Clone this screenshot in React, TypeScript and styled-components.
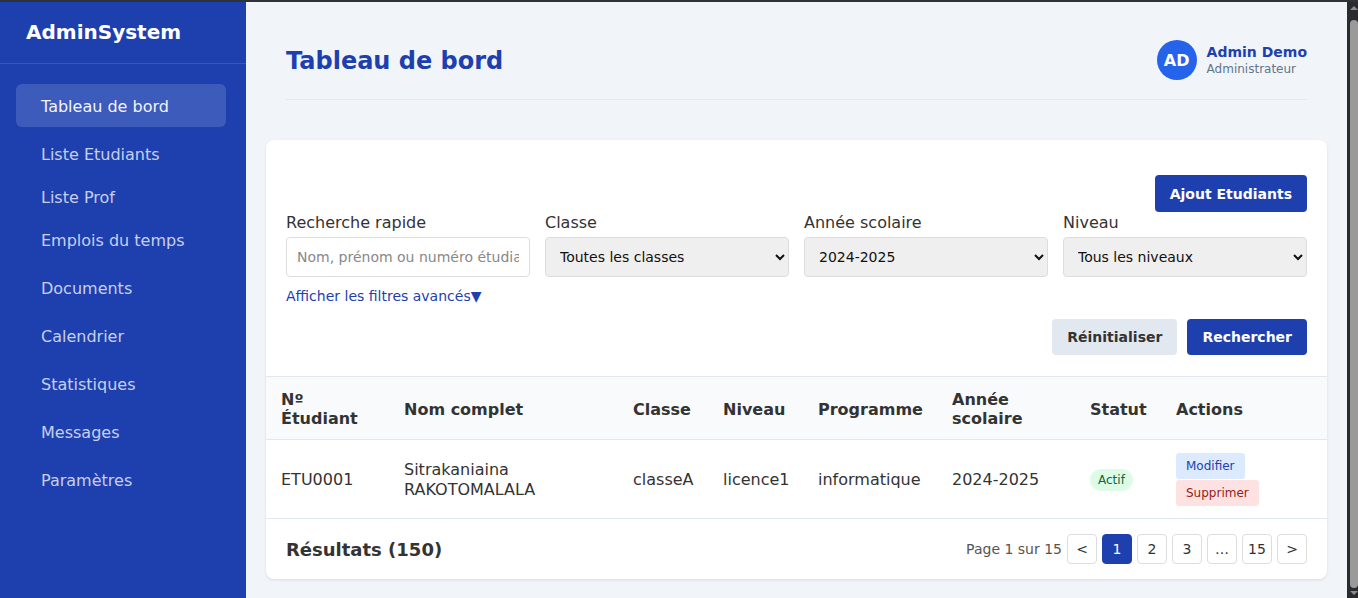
import React from "react";
import styled, { createGlobalStyle } from "styled-components";

const Global = createGlobalStyle`
  html { overflow: hidden; }
  * { box-sizing: border-box; }
  body { margin: 0; font-family: "DejaVu Sans", Verdana, sans-serif; color: #333; background: #f1f5f9; }
`;

const Layout = styled.div`
  display: flex;
  min-height: 100vh;
  margin-right: 11px;
`;

const TopEdge = styled.div`
  position: fixed;
  top: 0;
  left: 0;
  right: 0;
  height: 2px;
  background: #2f3236;
  z-index: 10;
`;

const ScrollTrack = styled.div`
  position: fixed;
  top: 0;
  right: 0;
  bottom: 0;
  width: 11px;
  background: #2b2b2f;
  z-index: 9;
`;

const ScrollThumb = styled.div`
  position: absolute;
  top: 20px;
  bottom: 10px;
  left: 3px;
  right: 0;
  border-radius: 4px;
  background: #9a9a9a;
`;

const ScrollArrow = styled.div<{ $down?: boolean }>`
  position: absolute;
  left: 3px;
  ${(p) => (p.$down ? "bottom: 3px;" : "top: 6px;")}
  width: 0;
  height: 0;
  border-left: 4px solid transparent;
  border-right: 4px solid transparent;
  ${(p) => (p.$down ? "border-top: 4px solid #8c8c8c;" : "border-bottom: 4px solid #8c8c8c;")}
`;

const Sidebar = styled.aside`
  width: 246px;
  flex-shrink: 0;
  background: #1e40af;
  color: #fff;
`;

const Brand = styled.div`
  height: 64px;
  padding: 0 26px;
  display: flex;
  align-items: center;
  font-size: 20px;
  font-weight: bold;
  border-bottom: 1px solid rgba(255, 255, 255, 0.12);
`;

const Nav = styled.nav`
  padding: 20px 20px 0 16px;
  display: flex;
  flex-direction: column;
`;

const NavItem = styled.a<{ $active?: boolean; $tight?: boolean }>`
  display: flex;
  align-items: center;
  height: 43px;
  padding: 1px 0 0 25px;
  margin-bottom: ${(p) => (p.$tight ? "0" : "5px")};
  border-radius: 6px;
  font-size: 16px;
  color: ${(p) => (p.$active ? "#f1f4fb" : "rgba(255,255,255,0.76)")};
  background: ${(p) => (p.$active ? "rgba(255,255,255,0.14)" : "transparent")};
  text-decoration: none;
`;

const Main = styled.main`
  flex: 1;
  padding: 20px;
  min-width: 0;
`;

const Header = styled.header`
  margin: 0 20px;
  padding: 20px 0 19px;
  border-bottom: 1px solid #e2e8f0;
  display: flex;
  justify-content: space-between;
  align-items: center;
`;

const Title = styled.h1`
  margin: 0;
  padding-top: 1px;
  font-size: 24px;
  font-weight: bold;
  color: #1e40af;
`;

const User = styled.div`
  display: flex;
  align-items: center;
  gap: 10px;
`;

const Avatar = styled.div`
  width: 40px;
  height: 40px;
  border-radius: 50%;
  background: #2563eb;
  color: #fff;
  font-weight: bold;
  font-size: 16px;
  display: flex;
  align-items: center;
  justify-content: center;
`;

const UserInfo = styled.div`
  display: flex;
  flex-direction: column;
  gap: 2px;
`;

const UserName = styled.span`
  font-size: 14px;
  font-weight: bold;
  color: #1e40af;
`;

const UserRole = styled.span`
  font-size: 12px;
  color: #64748b;
`;

const Card = styled.section`
  margin-top: 40px;
  background: #fff;
  border-radius: 8px;
  box-shadow: 0 1px 3px rgba(0, 0, 0, 0.1);
  overflow: hidden;
`;

const Filters = styled.div`
  padding: 35px 20px 21px;
  border-bottom: 1px solid #e2e8f0;
`;

const TopActions = styled.div`
  display: flex;
  justify-content: flex-end;
`;

const Button = styled.button<{ $variant?: "primary" | "secondary" }>`
  height: 36px;
  padding: 0 15px;
  border: none;
  border-radius: 4px;
  font-family: inherit;
  font-size: 14px;
  font-weight: bold;
  cursor: pointer;
  background: ${(p) => (p.$variant === "secondary" ? "#e2e8f0" : "#1e40af")};
  color: ${(p) => (p.$variant === "secondary" ? "#333" : "#fff")};
`;

const AddButton = styled(Button)`
  height: 37px;
`;

const Grid = styled.div`
  display: grid;
  grid-template-columns: repeat(4, 1fr);
  gap: 15px;
`;

const Field = styled.div`
  display: flex;
  flex-direction: column;
`;

const Label = styled.label`
  font-size: 16px;
  line-height: 19px;
  margin-bottom: 5px;
  padding-top: 1px;
  color: #333;
`;

const Input = styled.input`
  height: 40px;
  padding: 0 10px;
  border: 1px solid #ddd;
  border-radius: 4px;
  font-family: inherit;
  font-size: 14px;
  &::placeholder { color: #888; }
`;

const Select = styled.select`
  height: 40px;
  padding: 0 10px;
  border: 1px solid #ddd;
  border-radius: 4px;
  background: #efefef;
  font-family: inherit;
  font-size: 14px;
  color: #111;
`;

const Toggle = styled.a`
  display: inline-block;
  margin-top: 11px;
  font-size: 14px;
  line-height: 17px;
  color: #1e40af;
  cursor: pointer;
`;

const BottomActions = styled.div`
  display: flex;
  justify-content: flex-end;
  gap: 10px;
  margin-top: 14px;
`;

const Table = styled.table`
  width: 100%;
  border-collapse: collapse;
  table-layout: fixed;
`;

const Th = styled.th`
  text-align: left;
  padding: 13px 15px 11px;
  font-size: 16px;
  line-height: 19px;
  font-weight: bold;
  color: #333;
  background: #f8fafc;
  border-bottom: 1px solid #e2e8f0;
`;

const Td = styled.td`
  padding: 13px 15px 12px;
  font-size: 16px;
  line-height: 20px;
  color: #333;
  border-bottom: 1px solid #e2e8f0;
  vertical-align: middle;
`;

const Badge = styled.span`
  display: inline-block;
  padding: 3px 8px;
  border-radius: 11px;
  font-size: 12px;
  line-height: 16px;
  background: #dcfce7;
  color: #166534;
`;

const ActionList = styled.div`
  display: flex;
  flex-direction: column;
  align-items: flex-start;
  gap: 1px;
`;

const SmallButton = styled.button<{ $danger?: boolean }>`
  padding: 5px 10px;
  border: none;
  border-radius: 3px;
  font-family: inherit;
  font-size: 12px;
  line-height: 16px;
  background: ${(p) => (p.$danger ? "#fee2e2" : "#dbeafe")};
  color: ${(p) => (p.$danger ? "#991b1b" : "#1e40af")};
  cursor: pointer;
`;

const Footer = styled.div`
  display: flex;
  justify-content: space-between;
  align-items: center;
  padding: 15px 20px;
`;

const Results = styled.div`
  padding-top: 1px;
  font-size: 18px;
  font-weight: bold;
  color: #333;
`;

const Pager = styled.div`
  display: flex;
  align-items: center;
  gap: 5px;
`;

const PageInfo = styled.span`
  font-size: 14px;
  color: #555;
`;

const PageButton = styled.button<{ $active?: boolean }>`
  min-width: 30px;
  height: 30px;
  padding: 0 5px;
  border: 1px solid ${(p) => (p.$active ? "#1e40af" : "#ddd")};
  border-radius: 4px;
  background: ${(p) => (p.$active ? "#1e40af" : "#fff")};
  color: ${(p) => (p.$active ? "#fff" : "#333")};
  font-family: inherit;
  font-size: 14px;
  cursor: pointer;
`;

const navItems: { label: string; active?: boolean; tight?: boolean }[] = [
  { label: "Tableau de bord", active: true },
  { label: "Liste Etudiants", tight: true },
  { label: "Liste Prof", tight: true },
  { label: "Emplois du temps" },
  { label: "Documents" },
  { label: "Calendrier" },
  { label: "Statistiques" },
  { label: "Messages" },
  { label: "Paramètres" },
];

const colWidths = [123, 229, 90, 95, 134, 138, 86, 166];

export default function App() {
  return (
    <>
      <Global />
      <TopEdge />
      <ScrollTrack>
        <ScrollArrow />
        <ScrollThumb />
        <ScrollArrow $down />
      </ScrollTrack>
      <Layout>
        <Sidebar>
          <Brand>AdminSystem</Brand>
          <Nav>
            {navItems.map((n) => (
              <NavItem key={n.label} $active={n.active} $tight={n.tight}>
                {n.label}
              </NavItem>
            ))}
          </Nav>
        </Sidebar>
        <Main>
          <Header>
            <Title>Tableau de bord</Title>
            <User>
              <Avatar>AD</Avatar>
              <UserInfo>
                <UserName>Admin Demo</UserName>
                <UserRole>Administrateur</UserRole>
              </UserInfo>
            </User>
          </Header>
          <Card>
            <Filters>
              <TopActions>
                <AddButton>Ajout Etudiants</AddButton>
              </TopActions>
              <Grid>
                <Field>
                  <Label>Recherche rapide</Label>
                  <Input placeholder="Nom, prénom ou numéro étudiant" />
                </Field>
                <Field>
                  <Label>Classe</Label>
                  <Select defaultValue="all">
                    <option value="all">Toutes les classes</option>
                  </Select>
                </Field>
                <Field>
                  <Label>Année scolaire</Label>
                  <Select defaultValue="2024">
                    <option value="2024">2024-2025</option>
                  </Select>
                </Field>
                <Field>
                  <Label>Niveau</Label>
                  <Select defaultValue="all">
                    <option value="all">Tous les niveaux</option>
                  </Select>
                </Field>
              </Grid>
              <Toggle>Afficher les filtres avancés▼</Toggle>
              <BottomActions>
                <Button $variant="secondary">Réinitialiser</Button>
                <Button $variant="primary">Rechercher</Button>
              </BottomActions>
            </Filters>
            <Table>
              <colgroup>
                {colWidths.map((w, i) => (
                  <col key={i} style={{ width: w }} />
                ))}
              </colgroup>
              <thead>
                <tr>
                  <Th>Nº Étudiant</Th>
                  <Th>Nom complet</Th>
                  <Th>Classe</Th>
                  <Th>Niveau</Th>
                  <Th>Programme</Th>
                  <Th>Année scolaire</Th>
                  <Th>Statut</Th>
                  <Th>Actions</Th>
                </tr>
              </thead>
              <tbody>
                <tr>
                  <Td>ETU0001</Td>
                  <Td>Sitrakaniaina RAKOTOMALALA</Td>
                  <Td>classeA</Td>
                  <Td>licence1</Td>
                  <Td>informatique</Td>
                  <Td>2024-2025</Td>
                  <Td>
                    <Badge>Actif</Badge>
                  </Td>
                  <Td>
                    <ActionList>
                      <SmallButton>Modifier</SmallButton>
                      <SmallButton $danger>Supprimer</SmallButton>
                    </ActionList>
                  </Td>
                </tr>
              </tbody>
            </Table>
            <Footer>
              <Results>Résultats (150)</Results>
              <Pager>
                <PageInfo>Page 1 sur 15</PageInfo>
                <PageButton>&lt;</PageButton>
                <PageButton $active>1</PageButton>
                <PageButton>2</PageButton>
                <PageButton>3</PageButton>
                <PageButton>…</PageButton>
                <PageButton>15</PageButton>
                <PageButton>&gt;</PageButton>
              </Pager>
            </Footer>
          </Card>
        </Main>
      </Layout>
    </>
  );
}
